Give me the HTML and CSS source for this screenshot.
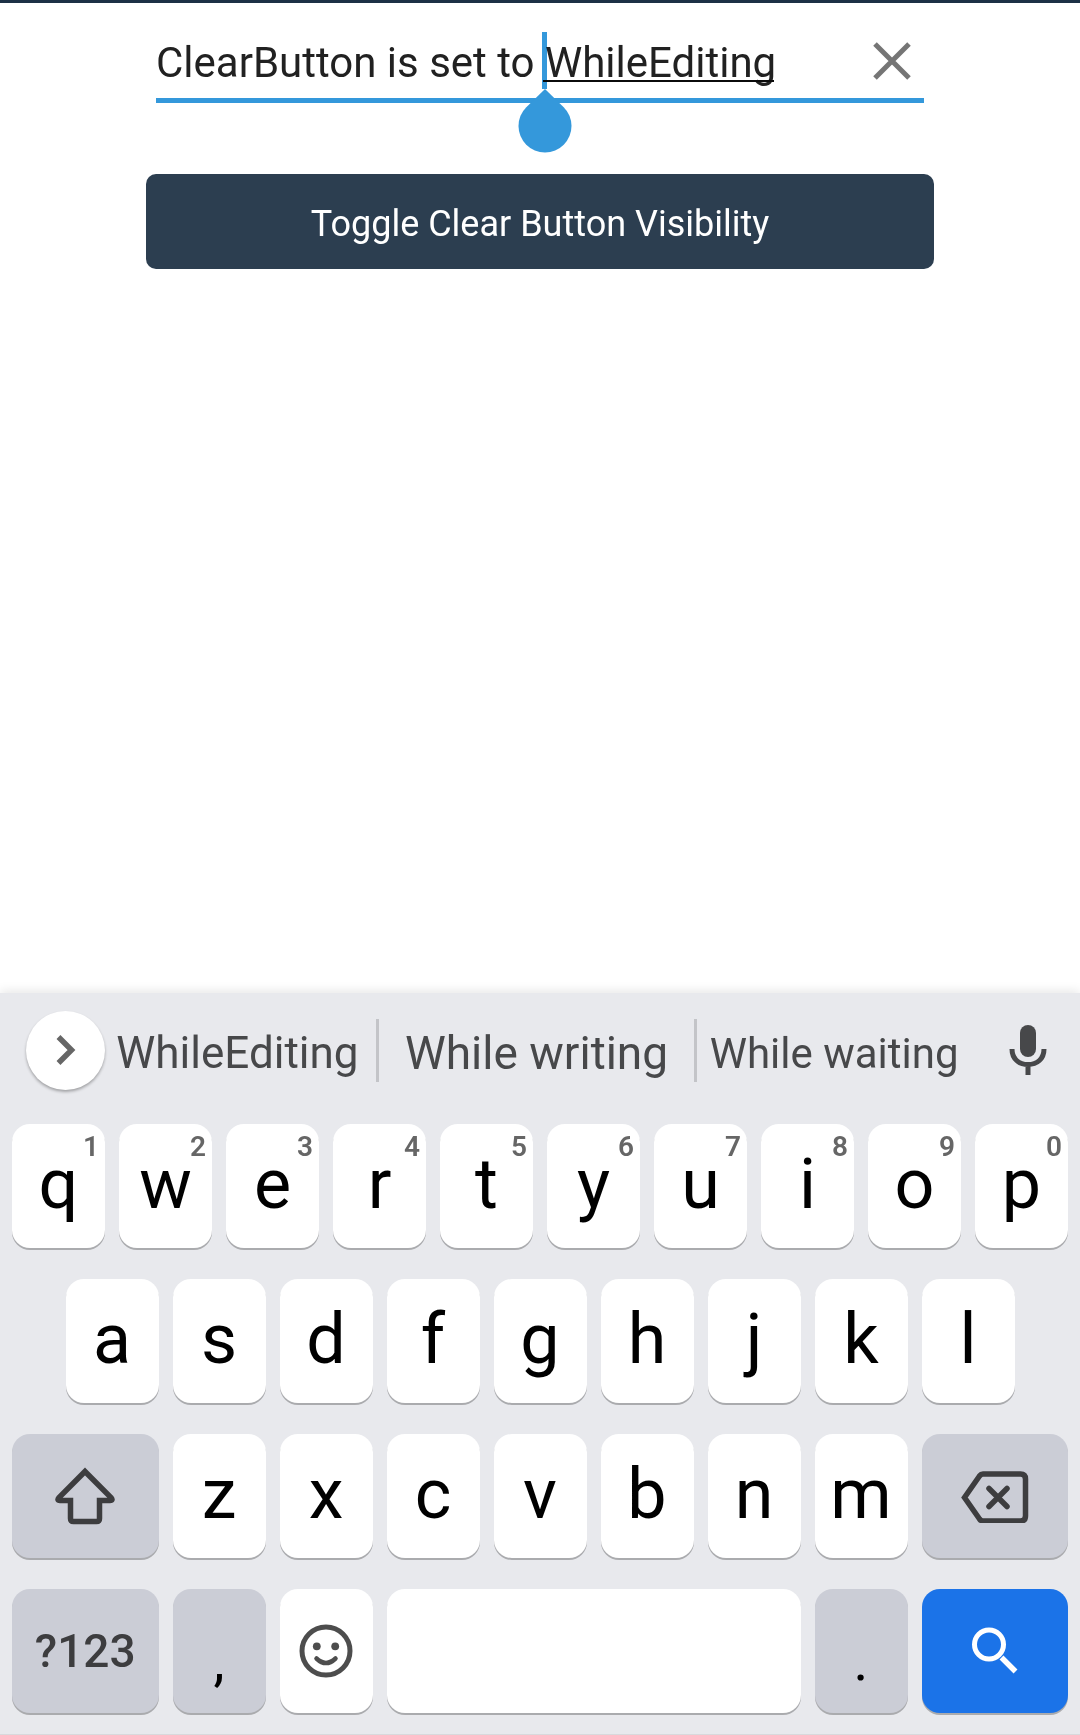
FILE: index.html
```html
<!DOCTYPE html>
<html lang="en">
<head>
<meta charset="utf-8">
<meta name="viewport" content="width=device-width, initial-scale=1">
<title>Clear Button</title>
<link rel="stylesheet" href="styles.css">
</head>
<body>
<main class="page">
  <div class="entry">
    <input class="entry-input" type="text" value="ClearButton is set to WhileEditing" aria-label="Text entry">
    <button class="clear" type="button" aria-label="Clear text">
      <svg width="38" height="38" viewBox="0 0 38 38"><path d="M2 2L36 36M36 2L2 36" fill="none" stroke="#757575" stroke-width="5"/></svg>
    </button>
    <span class="composing"></span>
    <span class="caret"></span>
    <svg class="handle" width="54" height="64" viewBox="0 0 54 64" aria-hidden="true"><path d="M27 0L45.700 18.200A26.500 26.500 0 1 1 8.300 18.200Z" fill="#3498db"/></svg>
  </div>
  <button class="toggle" type="button">Toggle Clear Button Visibility</button>
</main>

<section class="keyboard" aria-label="Keyboard">
  <div class="suggestions">
    <button class="expand" type="button" aria-label="More tools">
      <svg width="20" height="32" viewBox="0 0 20 32"><path d="M2.500 3L15.500 16L2.500 29" fill="none" stroke="#666" stroke-width="5.500"/></svg>
    </button>
    <button class="suggestion suggestion-first" type="button">WhileEditing</button>
    <button class="suggestion suggestion-main" type="button">While writing</button>
    <button class="suggestion suggestion-last" type="button">While waiting</button>
    <button class="mic" type="button" aria-label="Voice input">
      <svg width="38" height="52" viewBox="0 0 38 52"><rect x="11" y="1" width="16" height="32" rx="8" fill="#47484a"/><path d="M3 25C3 35 10 40.500 19 40.500S35 35 35 25M19 40V51" fill="none" stroke="#47484a" stroke-width="5"/></svg>
    </button>
  </div>

  <div class="row">
    <button class="key" type="button">q<span class="hint">1</span></button>
    <button class="key" type="button">w<span class="hint">2</span></button>
    <button class="key" type="button">e<span class="hint">3</span></button>
    <button class="key" type="button">r<span class="hint">4</span></button>
    <button class="key" type="button">t<span class="hint">5</span></button>
    <button class="key" type="button">y<span class="hint">6</span></button>
    <button class="key" type="button">u<span class="hint">7</span></button>
    <button class="key" type="button">i<span class="hint">8</span></button>
    <button class="key" type="button">o<span class="hint">9</span></button>
    <button class="key" type="button">p<span class="hint">0</span></button>
  </div>
  <div class="row row-home">
    <button class="key" type="button">a</button>
    <button class="key" type="button">s</button>
    <button class="key" type="button">d</button>
    <button class="key" type="button">f</button>
    <button class="key" type="button">g</button>
    <button class="key" type="button">h</button>
    <button class="key" type="button">j</button>
    <button class="key" type="button">k</button>
    <button class="key" type="button">l</button>
  </div>
  <div class="row">
    <button class="key key-wide key-grey key-icon" type="button" aria-label="Shift">
      <svg width="60" height="58" viewBox="0 0 60 58"><path d="M30 4.500L56 30.500Q58.500 33.500 55 33.500H44.500V51.500Q44.500 54.500 41.500 54.500H18.500Q15.500 54.500 15.500 51.500V33.500H5Q1.500 33.500 4 30.500Z" fill="none" stroke="#3d3d3f" stroke-width="5.500"/></svg>
    </button>
    <button class="key" type="button">z</button>
    <button class="key" type="button">x</button>
    <button class="key" type="button">c</button>
    <button class="key" type="button">v</button>
    <button class="key" type="button">b</button>
    <button class="key" type="button">n</button>
    <button class="key" type="button">m</button>
    <button class="key key-wide key-grey key-icon" type="button" aria-label="Backspace">
      <svg width="68" height="54" viewBox="0 0 68 54"><path d="M3.500 28.500L18.500 7Q20 5 22 5H59.500Q64.500 5 64.500 10V47Q64.500 52 59.500 52H22Q20 52 18.500 50Z" fill="none" stroke="#3d3d3f" stroke-width="5.500"/><path d="M28 19.500L46 37.500M46 19.500L28 37.500" fill="none" stroke="#3d3d3f" stroke-width="5.500" stroke-linecap="round"/></svg>
    </button>
  </div>
  <div class="row">
    <button class="key key-wide key-grey key-symbols" type="button">?123</button>
    <button class="key key-grey key-mark" type="button">,</button>
    <button class="key key-icon" type="button" aria-label="Emoji">
      <svg width="54" height="54" viewBox="0 0 54 54"><circle cx="27" cy="27" r="24" fill="none" stroke="#4d4d4d" stroke-width="5"/><circle cx="17.800" cy="22.300" r="3.900" fill="#4d4d4d"/><circle cx="36.200" cy="22.300" r="3.900" fill="#4d4d4d"/><path d="M17.500 34.500Q27 43.500 36.500 34.500" fill="none" stroke="#4d4d4d" stroke-width="4.500" stroke-linecap="round"/></svg>
    </button>
    <button class="key key-space" type="button" aria-label="Space"></button>
    <button class="key key-grey key-mark" type="button">.</button>
    <button class="key key-wide key-search key-icon" type="button" aria-label="Search">
      <svg width="46" height="48" viewBox="0 0 46 48"><circle cx="17" cy="17.500" r="14.500" fill="none" stroke="#fff" stroke-width="5"/><path d="M29.500 30.500L43.500 44.500" fill="none" stroke="#fff" stroke-width="5.500"/></svg>
    </button>
  </div>
</section>
</body>
</html>
```
FILE: styles.css
```css
* {
  box-sizing: border-box;
}

body {
  margin: 0;
  min-height: 100vh;
  display: flex;
  flex-direction: column;
  background: #fff;
  font-family: Roboto, sans-serif;
}

button,
input {
  margin: 0;
  padding: 0;
  border: 0;
  background: none;
  font: inherit;
}

svg {
  display: block;
}

/* Form */
.page {
  flex: 1;
  display: flex;
  flex-direction: column;
  align-items: center;
  border-top: 3px solid #1c3146;
}

.entry {
  position: relative;
  display: flex;
  width: calc(100% - 312px);
  height: 100px;
  border-bottom: 5px solid #3498db;
}

.entry-input {
  flex: 1;
  min-width: 0;
  padding-top: 24px;
  color: #212121;
  font-size: 42px;
  outline: none;
}

.clear {
  display: flex;
  align-items: center;
  padding: 20px 13px 0 20px;
}

.composing {
  position: absolute;
  left: 387px;
  top: 77px;
  width: 231px;
  height: 2px;
  background: #0b0b0b;
}

.caret {
  position: absolute;
  left: 386px;
  top: 29px;
  width: 5px;
  height: 57px;
  background: #3498db;
  mix-blend-mode: multiply;
}

.handle {
  position: absolute;
  left: 362px;
  top: 86px;
}

.toggle {
  width: calc(100% - 292px);
  height: 95px;
  margin-top: 71px;
  padding-top: 4px;
  border-radius: 10px;
  background: #2c3e50;
  color: #fff;
  font-size: 36px;
}

/* Keyboard */
.keyboard {
  display: flex;
  flex-direction: column;
  gap: 31px;
  padding: 0 5px 21px;
  border-bottom: 1px solid #d8d9dc;
  background: #e8e9ed;
  box-shadow: 0 -2px 10px rgba(0, 0, 0, 0.1);
}

.suggestions {
  display: flex;
  align-items: center;
  height: 100px;
  padding: 14px 28px 0 21px;
}

.expand {
  display: flex;
  flex: none;
  align-items: center;
  justify-content: center;
  width: 79px;
  height: 79px;
  border-radius: 50%;
  background: #fff;
  box-shadow: 0 2px 3px rgba(0, 0, 0, 0.3);
}

.suggestion {
  height: 63px;
  padding-top: 6px;
  color: #47484a;
  font-size: 46px;
  line-height: 57px;
  white-space: nowrap;
}

.suggestion-first {
  flex: 268 1 0;
  padding-right: 6px;
  font-size: 44px;
}

.suggestion-main {
  flex: 319 1 0;
  border: solid #c3c4c8;
  border-width: 0 3px;
}

.suggestion-last {
  flex: 277 1 0;
  font-size: 42px;
}

.mic {
  flex: none;
  margin-left: 38px;
}

.row {
  display: grid;
  grid-template-columns: repeat(20, 1fr);
}

.key {
  position: relative;
  display: flex;
  grid-column: span 2;
  align-items: center;
  justify-content: center;
  height: 124px;
  margin: 0 7px;
  padding-bottom: 4px;
  border-radius: 18px;
  background: #fff;
  box-shadow: 0 2px 0 #aaabae;
  color: #000;
  font-size: 70px;
  line-height: 82px;
}

.row-home .key:first-child {
  grid-column: 2 / span 2;
}

.key-wide {
  grid-column: span 3;
}

.key-space {
  grid-column: span 8;
}

.key-grey {
  background: #cbcdd6;
}

.key-search {
  background: #1b73e8;
}

.key-icon {
  padding-bottom: 0;
}

.key-symbols {
  padding-bottom: 0;
  color: #3d3d3f;
  font-size: 46px;
  font-weight: 500;
}

.key-mark {
  padding: 20px 0 0;
  font-size: 56px;
}

.hint {
  position: absolute;
  top: 6px;
  right: 6px;
  color: #666;
  font-size: 28px;
  font-weight: 600;
  line-height: 33px;
}
```
